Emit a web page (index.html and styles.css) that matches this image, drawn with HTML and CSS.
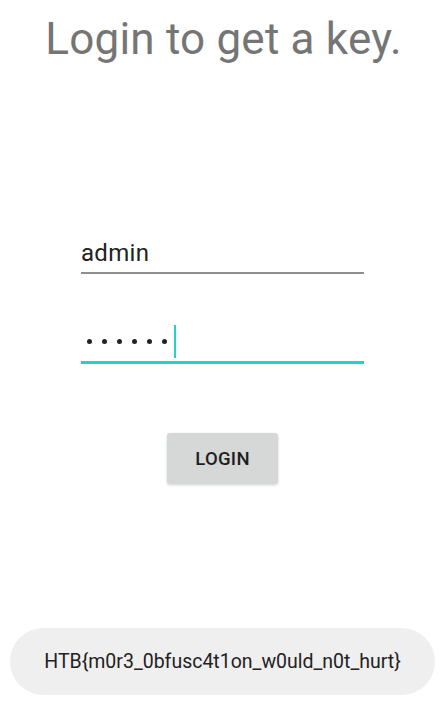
FILE: index.html
```html
<!DOCTYPE html>
<html>
<head>
<meta charset="utf-8">
<link rel="stylesheet" href="styles.css">
</head>
<body>
<div class="screen">
  <h1 class="title">Login to get a key.</h1>
  <div class="form">
    <div class="field field-user">
      <span class="value">admin</span>
    </div>
    <div class="field field-pass">
      <span class="dots"><i></i><i></i><i></i><i></i><i></i><i></i></span><span class="cursor"></span>
    </div>
    <div class="actions">
      <button class="btn">LOGIN</button>
    </div>
  </div>
  <div class="toast">HTB{m0r3_0bfusc4t1on_w0uld_n0t_hurt}</div>
</div>
</body>
</html>
```
FILE: styles.css
```css
html, body {
  margin: 0;
  padding: 0;
  background: #ffffff;
}
.screen {
  width: 447px;
  height: 719px;
  display: flex;
  flex-direction: column;
  font-family: Roboto, "Liberation Sans", sans-serif;
  box-sizing: border-box;
}
.title {
  margin: 13px 0 0 0;
  font-weight: 400;
  font-size: 44px;
  line-height: 52px;
  color: #757575;
  text-align: center;
  letter-spacing: 0.2px;
}
.form {
  display: flex;
  flex-direction: column;
  padding: 0 83px 0 81px;
  margin-top: 170px;
}
.field {
  display: flex;
  align-items: center;
  box-sizing: border-box;
}
.field-user {
  height: 39px;
  border-bottom: 2px solid #8f8f8f;
  padding-bottom: 2px;
}
.value {
  font-size: 24px;
  color: #222222;
  letter-spacing: 0.3px;
}
.field-pass {
  margin-top: 50px;
  height: 40px;
  border-bottom: 3px solid #1fd6c4;
  padding-bottom: 3px;
  padding-left: 6px;
}
.dots {
  display: flex;
  gap: 10px;
}
.dots i {
  display: block;
  width: 5px;
  height: 5px;
  border-radius: 50%;
  background: #222222;
}
.cursor {
  display: block;
  width: 2px;
  height: 33px;
  background: #1fd6c4;
  margin-left: 7px;
}
.actions {
  display: flex;
  justify-content: center;
  margin-top: 69px;
}
.btn {
  width: 111px;
  height: 51px;
  border: none;
  border-radius: 3px;
  background: #d6d7d7;
  font-family: Roboto, "Liberation Sans", sans-serif;
  font-weight: 500;
  font-size: 18.5px;
  color: #1f1f1f;
  letter-spacing: 0.3px;
  box-shadow: 0 1px 3px rgba(0,0,0,0.18);
  margin-left: 0px;
}
.toast {
  margin: auto 12px 24px 10px;
  height: 67px;
  border-radius: 34px;
  background: #efefef;
  display: flex;
  align-items: center;
  justify-content: center;
  font-size: 19.5px;
  color: #222222;
}
```
